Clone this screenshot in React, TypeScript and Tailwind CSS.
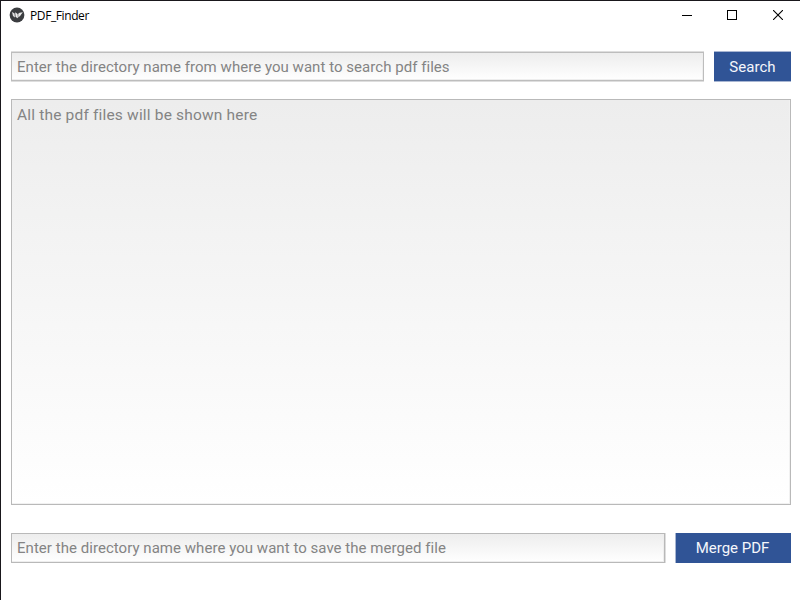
import React from "react";

function KivyLogo() {
  return (
    <svg width="16" height="16" viewBox="0 0 16 16" className="-mt-px shrink-0">
      <circle cx="8" cy="8" r="7.4" fill="#3b3d40" />
      <path d="M3 5 L5.6 6.4 L5.9 10.4 L4 9 Z" fill="#e4e4e4" />
      <path d="M6.2 5.2 L8.6 7 L8.9 11.3 L6.6 10 Z" fill="#f2f2f2" />
      <path d="M9.2 6.8 L10.6 5.8 L13.9 5.2 L12.1 7.4 L11.3 8.8 L9.3 10.6 Z" fill="#e9e9e9" />
    </svg>
  );
}

function TitleBar() {
  return (
    <header className="flex h-[29px] items-center pl-2">
      <KivyLogo />
      <h1 className="ml-[5px] font-['Open_Sans',sans-serif] text-[12px] leading-4 tracking-[-0.4px] text-black">
        PDF_Finder
      </h1>
      <div className="ml-auto flex h-full items-center pb-px">
        <button aria-label="Minimize" className="flex w-[45px] justify-center">
          <svg width="10" height="11" viewBox="0 0 10 11" shapeRendering="crispEdges">
            <path d="M0 5.5H10" stroke="#000" />
          </svg>
        </button>
        <button aria-label="Maximize" className="flex w-[45px] justify-center">
          <svg width="10" height="10" viewBox="0 0 10 10" shapeRendering="crispEdges">
            <rect x="0.5" y="0.5" width="9" height="9" fill="none" stroke="#000" />
          </svg>
        </button>
        <button aria-label="Close" className="flex w-[46px] justify-center pl-0.5">
          <svg width="10" height="10" viewBox="0 0 10 10">
            <path d="M0 0L10 10M10 0L0 10" stroke="#000" strokeWidth="1.1" />
          </svg>
        </button>
      </div>
    </header>
  );
}

export default function App() {
  return (
    <div className="h-[600px] w-[800px] overflow-hidden border-l border-t border-[#19171b] bg-white font-['Roboto',sans-serif] text-[15px] text-[#848484]">
      <TitleBar />
      <main className="flex flex-col pl-[10px] pr-[9px] pt-[21px]">
        <div className="flex h-[31px] gap-[10px]">
          <div className="flex flex-1 flex-col border-y border-[#dedede]">
            <div className="flex flex-1 items-center whitespace-nowrap border border-[#bdbdbd] bg-linear-to-b from-[#ededed] to-white pl-[5px] pt-0.5 tracking-[0.04px] shadow-[inset_-1px_-1px_0_#eeeeee]">
              Enter the directory name from where you want to search pdf files
            </div>
          </div>
          <button className="w-[77px] border-y border-[#a8b6d2] bg-[#305496] pt-0.5 tracking-[0.05px] text-[#f5f7fb]">
            Search
          </button>
        </div>
        <div className="mt-[17px] h-[406px] border border-[#b9b9b9] bg-linear-to-b from-[#ededed] to-white pl-[5px] pt-[5px] text-[15.5px] leading-5 tracking-[0.18px] shadow-[inset_-1px_-1px_0_#f1f1f1]">
          All the pdf files will be shown here
        </div>
        <div className="mt-7 flex h-[30px] gap-[9px]">
          <div className="flex w-[655px] border-r border-[#dedede]">
            <div className="flex flex-1 items-center whitespace-nowrap border border-[#b9b9b9] bg-linear-to-b from-[#ededed] to-white pl-[5px] tracking-[0.04px] shadow-[inset_-1px_-1px_0_#eeeeee]">
              Enter the directory name where you want to save the merged file
            </div>
          </div>
          <button className="flex-1 border-l border-[#a8b6d2] bg-[#305496] pr-0.5 text-[#f5f7fb]">
            Merge PDF
          </button>
        </div>
      </main>
    </div>
  );
}
